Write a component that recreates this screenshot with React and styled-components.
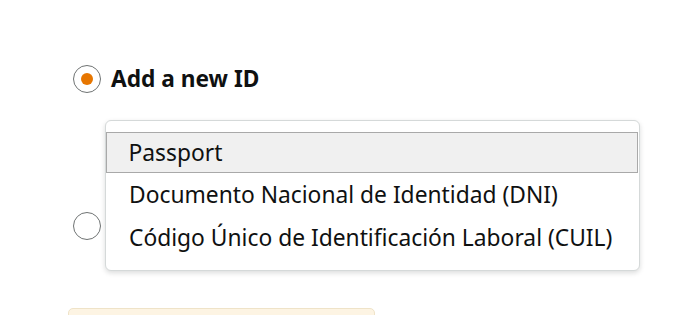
import React from "react"
import styled, { createGlobalStyle } from "styled-components"

const Global = createGlobalStyle`
  html, body {
    margin: 0;
    padding: 0;
    background: #ffffff;
  }
  body {
    font-family: "Noto Sans", "Open Sans", Arial, sans-serif;
    color: #0f1111;
  }
`

const options = [
  "Passport",
  "Documento Nacional de Identidad (DNI)",
  "Código Único de Identificación Laboral (CUIL)",
]

const App = () => (
  <Page>
    <Global />
    <RadioRow>
      <Radio checked />
      <Label>Add a new ID</Label>
    </RadioRow>
    <MenuArea>
      <SideRadio>
        <Radio />
      </SideRadio>
      <Menu>
        {options.map((o, i) => (
          <Option key={o} active={i === 0}>
            {o}
          </Option>
        ))}
      </Menu>
    </MenuArea>
    <Notice />
  </Page>
)
export default App

const Page = styled.div`
  width: 696px;
  height: 315px;
  overflow: hidden;
  padding: 65px 0 0 68px;
  box-sizing: border-box;
`

const RadioRow = styled.div`
  display: flex;
  align-items: center;
  gap: 10px;
  padding-left: 5px;
  height: 28px;
`

const Radio = styled.span`
  width: 28px;
  height: 28px;
  border-radius: 50%;
  border: 1.5px solid #6f7373;
  box-sizing: border-box;
  display: inline-flex;
  align-items: center;
  justify-content: center;
  background: #fff;
  &::after {
    content: "";
    width: 12px;
    height: 12px;
    border-radius: 50%;
    background: ${p => (p.checked ? "#e77600" : "transparent")};
  }
`

const Label = styled.span`
  font-size: 22.7px;
  font-weight: 700;
  line-height: 28px;
`

const MenuArea = styled.div`
  position: relative;
  margin-top: 27px;
  padding-left: 37px;
`

const SideRadio = styled.div`
  position: absolute;
  left: 5px;
  top: 92px;
`

const Menu = styled.div`
  position: relative;
  width: 535px;
  box-sizing: border-box;
  background: #fff;
  border: 1px solid #d5d9d9;
  border-radius: 6px;
  box-shadow: 0 2px 5px rgba(15, 17, 17, 0.15);
  padding: 11px 0 11px;
`

const Option = styled.div`
  height: ${p => (p.active ? "41px" : "43px")};
  display: flex;
  align-items: center;
  padding-left: ${p => (p.active ? "21.5px" : "23px")};
  font-size: 22.8px;
  box-sizing: border-box;
  background: ${p => (p.active ? "#f0f0f0" : "transparent")};
  border: ${p => (p.active ? "1.5px solid #a9a9a9" : "none")};
  margin-right: ${p => (p.active ? "1px" : "0")};
`

const Notice = styled.div`
  margin-top: 37px;
  width: 305px;
  height: 40px;
  background: #fdf4e3;
  border: 1px solid #efe3c8;
  border-radius: 5px;
`
